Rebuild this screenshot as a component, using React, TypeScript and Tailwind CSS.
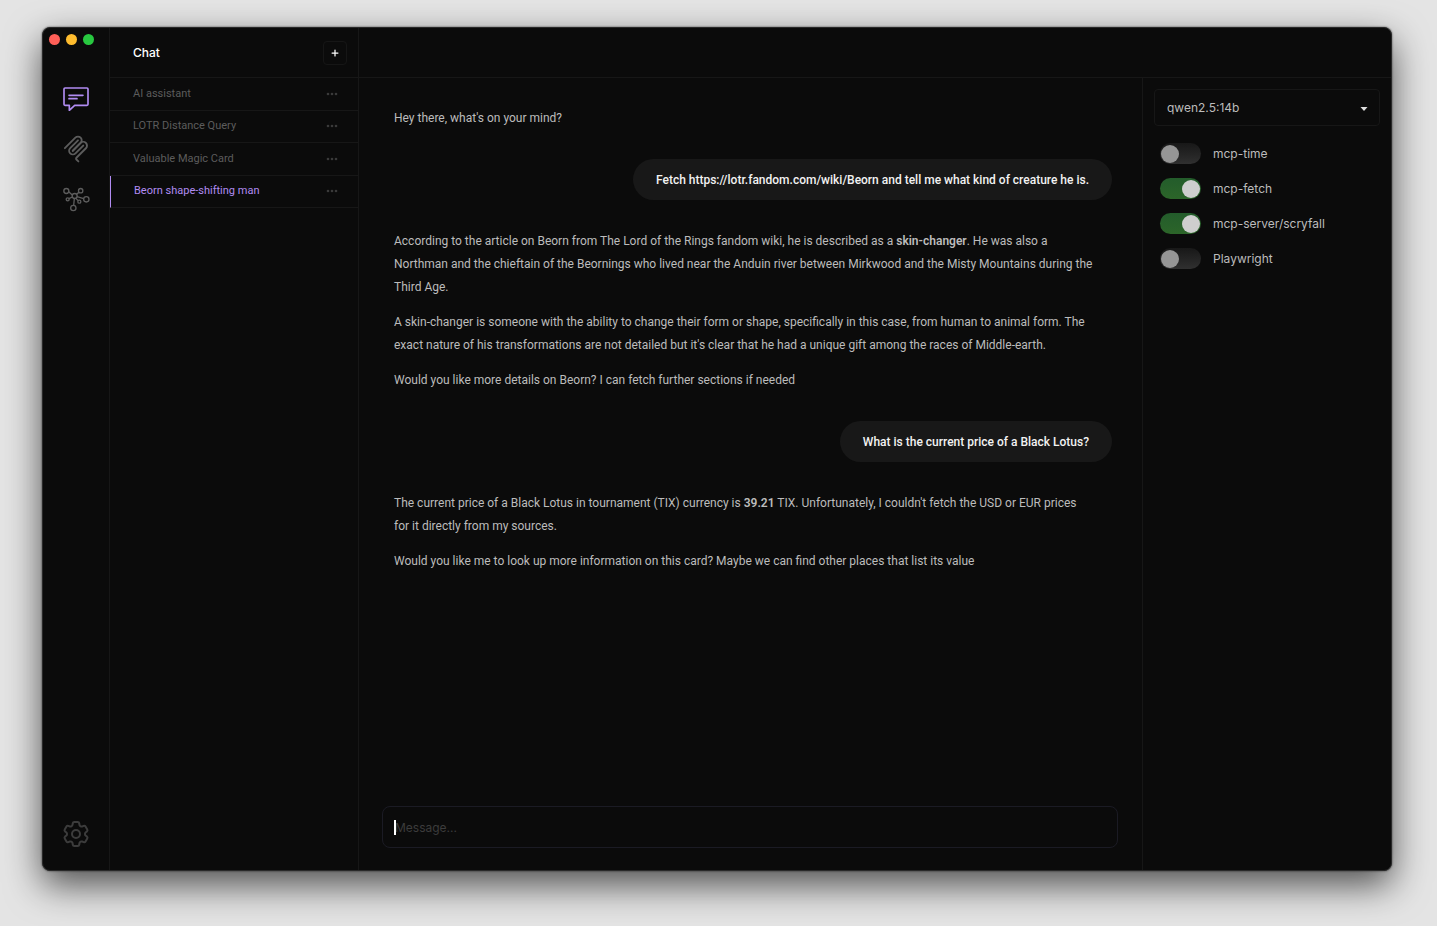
import React, { useState } from "react";
import { HiOutlineCog6Tooth } from "react-icons/hi2";
import { Plus } from "lucide-react";

const chats = ["AI assistant", "LOTR Distance Query", "Valuable Magic Card", "Beorn shape-shifting man"];

function ChatIcon() {
  return (
    <svg viewBox="0 0 78 72" className="h-6 w-[26px]" fill="none" stroke="currentColor" strokeWidth="5" strokeLinejoin="round" strokeLinecap="round" aria-hidden="true">
      <path d="M6 3h66q3 0 3 3v46q0 3-3 3H35L19 70V55H6q-3 0-3-3V6q0-3 3-3z" />
      <path d="M18 25h42M18 35h24" />
    </svg>
  );
}

function McpIcon() {
  return (
    <svg viewBox="6 0 168 180" className="h-7 w-[26px]" fill="none" stroke="currentColor" strokeWidth="12" strokeLinecap="round" aria-hidden="true">
      <path d="M18 84.8528L85.8822 16.9706C95.2548 7.59798 110.451 7.59798 119.823 16.9706C129.196 26.3431 129.196 41.5391 119.823 50.9117L68.5581 102.177" />
      <path d="M69.2652 101.47L119.823 50.9117C129.196 41.5391 144.392 41.5391 153.765 50.9117L154.118 51.2652C163.491 60.6378 163.491 75.8338 154.118 85.2063L92.7248 146.6C89.6006 149.724 89.6006 154.789 92.7248 157.913L105.331 170.52" />
      <path d="M102.853 33.9411L52.6482 84.1457C43.2756 93.5183 43.2756 108.714 52.6482 118.087C62.0208 127.459 77.2167 127.459 86.5893 118.087L136.794 67.8822" />
    </svg>
  );
}

function NodesIcon() {
  return (
    <svg viewBox="0 0 81 75" className="h-[25px] w-[27px]" fill="none" stroke="currentColor" strokeWidth="4" aria-hidden="true">
      <circle cx="10" cy="12" r="7.5" />
      <circle cx="53" cy="11" r="6.5" />
      <circle cx="35" cy="27" r="7.5" />
      <circle cx="14" cy="37" r="4.5" />
      <circle cx="70" cy="37" r="8" />
      <circle cx="49" cy="44" r="4.5" />
      <circle cx="31" cy="63" r="8" />
      <path d="M17 14l11 10M48 16l-7 5M28 30l-10 5M42 29l20 6M39 34l6 7M34 35l-2 20" />
    </svg>
  );
}

function Toggle({ name, initial }: { name: string; initial: boolean }) {
  const [on, setOn] = useState(initial);
  return (
    <label className="flex h-[35px] cursor-pointer items-center gap-3 text-[12px] text-[#bcbcbc]">
      <input type="checkbox" role="switch" checked={on} onChange={() => setOn(!on)} className="peer sr-only" />
      <span className="flex h-[21px] w-[41px] items-center rounded-full bg-linear-to-b from-[#181818] to-[#303030] px-px peer-checked:justify-end peer-checked:from-[#235c2b] peer-checked:to-[#2c6529]">
        <span className={on ? "size-[18px] rounded-full bg-[#cecece]" : "size-[18px] rounded-full bg-[#969696]"} />
      </span>
      {name}
    </label>
  );
}

function Bubble({ children }: { children: React.ReactNode }) {
  return <div className="mt-[29px] mb-[30px] flex h-[41px] items-center self-end rounded-full bg-[#181818] px-[23px] pt-[2px] font-medium text-[#f2f2f2]">{children}</div>;
}

function Reply({ children }: { children: React.ReactNode }) {
  return <div className="flex flex-col gap-3 pr-4 pl-3">{children}</div>;
}

export default function App() {
  const [active, setActive] = useState(3);
  return (
    <div className="flex min-h-screen bg-[#e4e4e4] pt-[27px] pr-[45px] pb-[55px] pl-[42px] font-['Inter','Liberation_Sans',sans-serif]">
      <div className="flex flex-1 overflow-hidden rounded-lg border border-[#292929] bg-[#0b0b0b] shadow-[0_14px_36px_rgba(0,0,0,0.65),0_0_2px_rgba(0,0,0,0.7)]">
        <nav aria-label="Sections" className="flex w-[67px] shrink-0 flex-col items-center border-r border-[#171717] pb-[20px] text-[#5c5c5c]">
          <div className="flex w-full gap-[6px] pt-[6px] pl-[6px]">
            <span className="size-[11px] rounded-full bg-[#ff5f57]" />
            <span className="size-[11px] rounded-full bg-[#febc2e]" />
            <span className="size-[11px] rounded-full bg-[#28c840]" />
          </div>
          <div className="mt-[29px] flex flex-col text-[#5c5c5c]">
            <button aria-label="Chat" className="flex h-[50px] items-center text-[#b18cf2]"><ChatIcon /></button>
            <button aria-label="Servers" className="flex h-[50px] items-center"><McpIcon /></button>
            <button aria-label="Models" className="flex h-[50px] items-center"><NodesIcon /></button>
          </div>
          <button aria-label="Settings" className="mt-auto text-[#3c3c3c]"><HiOutlineCog6Tooth className="size-8" /></button>
        </nav>

        <div className="flex min-w-0 flex-1 flex-col">
          <header className="flex h-[50px] shrink-0 border-b border-[#171717]">
            <div className="flex w-[249px] shrink-0 items-center justify-between border-r border-[#171717] pr-[11px] pl-[23px]">
              <h1 className="text-[12px] font-medium text-white">Chat</h1>
              <button aria-label="New chat" className="flex size-6 items-center justify-center rounded border border-[#161616] text-white"><Plus size={10} strokeWidth={3} /></button>
            </div>
          </header>
          <div className="flex flex-1">
            <aside className="w-[249px] shrink-0 border-r border-[#171717]">
              <ul className="flex h-[130px] flex-col font-['Roboto','Inter',sans-serif] text-[11px] text-[#5c5c5c]">
                {chats.map((chat, i) => (
                  <li key={chat} className={i === active ? "flex flex-1 items-center border-b border-l border-b-[#171717] border-l-[#b18cf2] pr-5 pl-[23px] text-[#b18cf2]" : "flex flex-1 items-center border-b border-[#171717] pr-5 pl-[23px]"}>
                    <button onClick={() => setActive(i)} className="flex-1 text-left">{chat}</button>
                    <button aria-label={"Options for " + chat} className="text-[#3a3a3a]">
                      <svg viewBox="0 0 12 4" className="h-1 w-3" fill="currentColor" aria-hidden="true"><circle cx="2" cy="2" r="1.3" /><circle cx="6" cy="2" r="1.3" /><circle cx="10" cy="2" r="1.3" /></svg>
                    </button>
                  </li>
                ))}
              </ul>
            </aside>

            <main className="flex min-w-0 flex-1 flex-col pt-[29px] pr-6 pb-[22px] pl-[23px]">
              <div className="flex flex-1 flex-col pr-[6px] font-['Roboto','Inter',sans-serif] text-[12px] leading-[23px] text-[#bcbcbc]">
                <Reply><p>Hey there, what's on your mind?</p></Reply>
                <Bubble>Fetch https://lotr.fandom.com/wiki/Beorn and tell me what kind of creature he is.</Bubble>
                <Reply>
                  <p>According to the article on Beorn from The Lord of the Rings fandom wiki, he is described as a <strong className="font-semibold">skin-changer</strong>. He was also a Northman and the chieftain of the Beornings who lived near the Anduin river between Mirkwood and the Misty Mountains during the Third Age.</p>
                  <p>A skin-changer is someone with the ability to change their form or shape, specifically in this case, from human to animal form. The exact nature of his transformations are not detailed but it's clear that he had a unique gift among the races of Middle-earth.</p>
                  <p>Would you like more details on Beorn? I can fetch further sections if needed</p>
                </Reply>
                <Bubble>What is the current price of a Black Lotus?</Bubble>
                <Reply>
                  <p>The current price of a Black Lotus in tournament (TIX) currency is <strong className="font-semibold">39.21</strong> TIX. Unfortunately, I couldn't fetch the USD or EUR prices for&nbsp;it directly from my sources.</p>
                  <p>Would you like me to look up more information on this card? Maybe we can find other places that list its value</p>
                </Reply>
              </div>
              <div className="relative flex">
                <input aria-label="Message" placeholder="Message..." className="h-[42px] w-full rounded-lg border border-[#1b1b24] bg-transparent px-3 text-[12px] text-white outline-none placeholder:text-[#3c3c3c]" />
                <span className="absolute top-[14px] left-3 h-[15px] w-[2px] bg-white" />
              </div>
            </main>

            <aside className="w-[249px] shrink-0 border-l border-[#171717] px-[11px] pt-[11px]">
              <div className="relative mb-[10px]">
                <select aria-label="Model" className="h-[37px] w-full appearance-none rounded border border-[#171717] bg-transparent px-3 text-[12px] text-[#bcbcbc]">
                  <option>qwen2.5:14b</option>
                </select>
                <svg viewBox="0 0 8 4" className="pointer-events-none absolute top-[18px] right-3 h-1 w-2" fill="#dedede" aria-hidden="true"><path d="M0.5 0h7L4 4z" /></svg>
              </div>
              <div className="flex flex-col pl-[6px]">
                <Toggle name="mcp-time" initial={false} />
                <Toggle name="mcp-fetch" initial />
                <Toggle name="mcp-server/scryfall" initial />
                <Toggle name="Playwright" initial={false} />
              </div>
            </aside>
          </div>
        </div>
      </div>
    </div>
  );
}
